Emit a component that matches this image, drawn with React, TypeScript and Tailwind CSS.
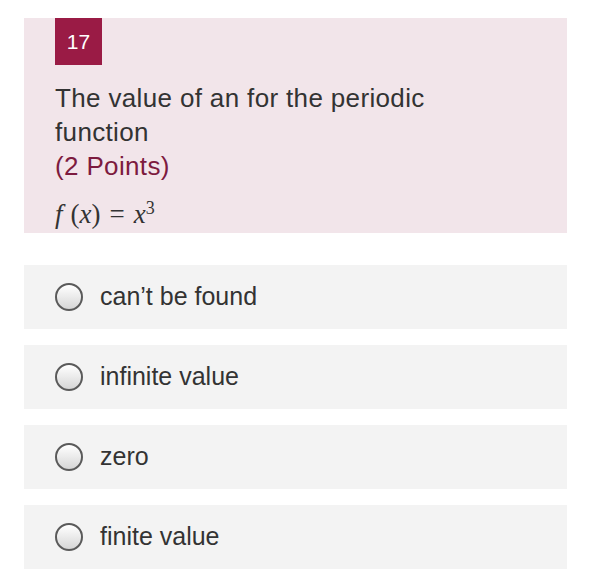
const options = ['can’t be found', 'infinite value', 'zero', 'finite value'];

function Radio() {
  return (
    <span className="block h-[28px] w-[28px] shrink-0 rounded-full border-2 border-[#5a5a5a] bg-gradient-to-b from-[#ffffff] to-[#d6d6d6]" />
  );
}

export default function App() {
  return (
    <div className="min-h-[582px] w-[591px] bg-white pt-[18px] font-['Liberation_Sans',Arial,sans-serif]">
      <div className="mx-[24px] h-[215px] overflow-hidden bg-[#f2e5ea] pl-[31px] pr-[20px]">
        <div className="flex h-[47px] w-[47px] items-center justify-center bg-[#9a1b45] text-[21px] text-white">
          17
        </div>
        <div className="mt-[16px] text-[26px] leading-[34px] tracking-[0.35px] text-[#333333]">
          The value of an for the periodic
          <br />
          function
        </div>
        <div className="text-[26px] leading-[34px] tracking-[0.35px] text-[#7d1b3f]">(2 Points)</div>
        <div className="mt-[13px] font-['Liberation_Serif','Times_New_Roman',serif] text-[27px] leading-[36px] text-[#333333]">
          <i>f</i>
          <span className="ml-[8px]">(</span>
          <i>x</i>)<span className="mx-[9px]">=</span>
          <i>x</i>
          <sup className="text-[18px]">3</sup>
        </div>
      </div>

      <div className="mt-[32px] flex flex-col gap-[16px]">
        {options.map((o) => (
          <div key={o} className="mx-[24px] flex h-[64px] items-center gap-[17px] bg-[#f3f3f3] pl-[31px]">
            <Radio />
            <span className="text-[25px] text-[#333333]">{o}</span>
          </div>
        ))}
      </div>
    </div>
  );
}
